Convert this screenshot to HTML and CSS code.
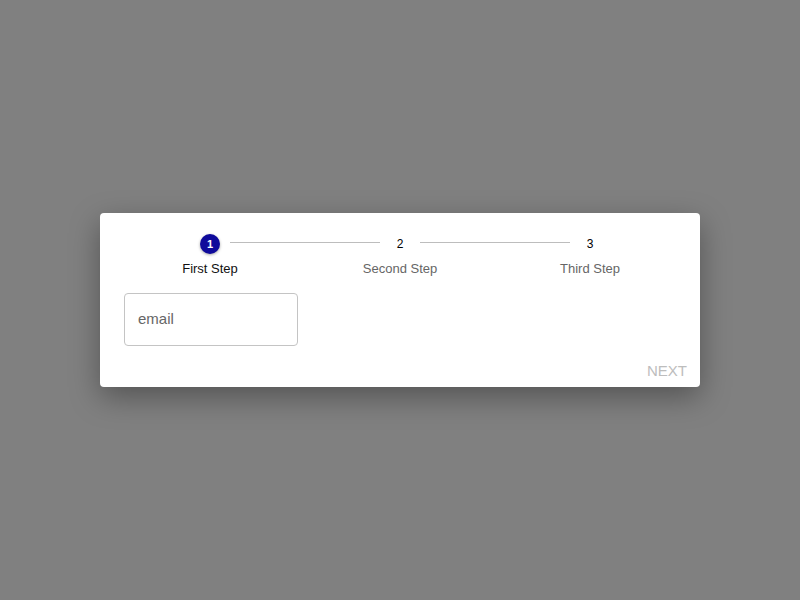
FILE: index.html
```html
<!DOCTYPE html>
<html lang="en">
<head>
  <meta charset="UTF-8" />
  <title>Stepper</title>
  <link rel="stylesheet" href="styles.css">
</head>
<body>
  <div class="card">
    <div class="stepper">
      <div class="step active">
        <div class="step-head">
          <span class="line hidden"></span>
          <span class="icon">1</span>
          <span class="line"></span>
        </div>
        <div class="label">First Step</div>
      </div>
      <div class="step">
        <div class="step-head">
          <span class="line"></span>
          <span class="icon">2</span>
          <span class="line"></span>
        </div>
        <div class="label">Second Step</div>
      </div>
      <div class="step">
        <div class="step-head">
          <span class="line"></span>
          <span class="icon">3</span>
          <span class="line hidden"></span>
        </div>
        <div class="label">Third Step</div>
      </div>
    </div>

    <div class="content">
      <input class="field" type="text" placeholder="email">
    </div>

    <div class="actions">
      <button class="next" disabled>NEXT</button>
    </div>
  </div>
</body>
</html>
```

FILE: styles.css
```css
html, body {
  height: 100%;
}

body {
  margin: 0;
  background-color: #808080;
  font-family: "Liberation Sans", Arial, sans-serif;
  display: flex;
  align-items: center;
  justify-content: center;
}

.card {
  width: 600px;
  height: 174px;
  background-color: #ffffff;
  border-radius: 4px;
  box-shadow: 0 10px 30px rgba(0, 0, 0, 0.35);
  display: flex;
  flex-direction: column;
  box-sizing: border-box;
  padding-top: 21px;
}

.stepper {
  display: grid;
  grid-template-columns: repeat(3, 190px);
  padding: 0 15px;
}

.step-head {
  display: flex;
  align-items: center;
  height: 20px;
}

.line {
  flex: 1;
  height: 1px;
  background-color: #bdbdbd;
  margin-top: -4px;
}

.step-head .line:first-child {
  margin-right: 10px;
}

.step-head .line:last-child {
  margin-left: 10px;
}

.line.hidden {
  visibility: hidden;
}

.icon {
  width: 20px;
  height: 20px;
  border-radius: 50%;
  display: flex;
  align-items: center;
  justify-content: center;
  font-size: 12px;
  color: #000000;
}

.step.active .icon {
  background-color: #0f0a9b;
  color: #ffffff;
  font-weight: bold;
  font-size: 11px;
  box-shadow: 0 1px 3px rgba(0, 0, 0, 0.35);
}

.label {
  margin-top: 7px;
  text-align: center;
  font-size: 13px;
  line-height: 16px;
  color: #666666;
}

.step.active .label {
  color: #111111;
}

.content {
  padding: 16px 24px 0;
}

.field {
  width: 174px;
  height: 53px;
  box-sizing: border-box;
  border: 1px solid #c4c4c4;
  border-radius: 4px;
  padding: 0 13px 2px;
  font-family: inherit;
  font-size: 15px;
  color: #333333;
  outline: none;
}

.field::placeholder {
  color: #666666;
}

.actions {
  margin-top: auto;
  display: flex;
  justify-content: flex-end;
}

.next {
  height: 34px;
  padding: 0 13px;
  border: none;
  background: none;
  font-family: inherit;
  font-size: 15px;
  color: #bdbdbd;
}
```
